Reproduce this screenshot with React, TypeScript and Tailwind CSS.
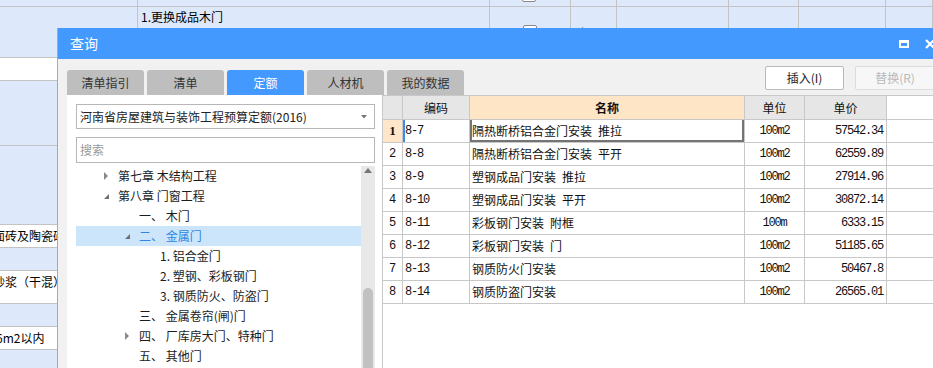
import React from "react";

const tabs = ["清单指引", "清单", "定额", "人材机", "我的数据"];

const tree = [
  { level: 1, text: "第七章 木结构工程", arrow: "right" },
  { level: 1, text: "第八章 门窗工程", arrow: "down" },
  { level: 2, text: "一、 木门" },
  { level: 2, text: "二、 金属门", arrow: "down", selected: true },
  { level: 3, text: "1. 铝合金门" },
  { level: 3, text: "2. 塑钢、彩板钢门" },
  { level: 3, text: "3. 钢质防火、防盗门" },
  { level: 2, text: "三、 金属卷帘(闸)门" },
  { level: 2, text: "四、 厂库房大门、特种门", arrow: "right" },
  { level: 2, text: "五、 其他门" },
];

const rows = [
  { code: "8-7", name: "隔热断桥铝合金门安装\u2002推拉", unit: "100m2", price: "57542.34" },
  { code: "8-8", name: "隔热断桥铝合金门安装\u2002平开", unit: "100m2", price: "62559.89" },
  { code: "8-9", name: "塑钢成品门安装\u2002推拉", unit: "100m2", price: "27914.96" },
  { code: "8-10", name: "塑钢成品门安装\u2002平开", unit: "100m2", price: "30872.14" },
  { code: "8-11", name: "彩板钢门安装\u2002附框", unit: "100m", price: "6333.15" },
  { code: "8-12", name: "彩板钢门安装\u2002门", unit: "100m2", price: "51185.65" },
  { code: "8-13", name: "钢质防火门安装", unit: "100m2", price: "50467.8" },
  { code: "8-14", name: "钢质防盗门安装", unit: "100m2", price: "26565.01" },
];

const topCols = [138, 352, 81, 46, 112, 70, 87, 47];

function Arrow({ dir }: { dir?: string }) {
  if (dir === "right")
    return (
      <svg width="14" height="20" viewBox="0 0 14 20">
        <path d="M0 6 L4 10 L0 14 Z" fill="#8a8a8a" />
      </svg>
    );
  if (dir === "down")
    return (
      <svg width="14" height="20" viewBox="0 0 14 20">
        <path d="M5 8 L5 13 L0 13 Z" fill="#6f6f6f" />
      </svg>
    );
  return <div className="w-[14px]" />;
}

function Background() {
  return (
    <div className="flex flex-col h-full text-[12px] text-black">
      <div className="flex h-[7px] border-b border-[#c3c3c3]">
        {topCols.map((w, i) => (
          <div key={i} style={{ width: w }} className="shrink-0 border-r border-[#c3c3c3] relative">
            {i === 2 && (
              <div className="absolute left-[32px] -top-[11px] w-[14px] h-[13px] border border-[#888] rounded-[2px] bg-white" />
            )}
          </div>
        ))}
      </div>
      <div className="flex h-[51px] border-b border-[#c3c3c3]">
        {topCols.map((w, i) => (
          <div key={i} style={{ width: w }} className="shrink-0 border-r border-[#c3c3c3] overflow-hidden">
            {i === 1 && (
              <div className="pl-[3px] pt-[1px] leading-[17px]">
                <div>1.更换成品木门</div>
                <div>2.更换门五金件</div>
              </div>
            )}
            {i === 2 && (
              <div className="ml-[33px] mt-[18px] w-[14px] h-[13px] border border-[#888] rounded-[2px] bg-white" />
            )}
            {i === 3 && <div className="pl-[5px] pt-[17px]">账</div>}
          </div>
        ))}
      </div>
      <div className="h-[23px] border-b border-[#c3c3c3] bg-white" />
      <div className="h-[65px] border-b border-[#c3c3c3]" />
      <div className="h-[79px] border-b border-[#c3c3c3]" />
      <div className="h-[23px] border-b border-[#c3c3c3] bg-white flex items-center">
        <span className="-ml-[7px] whitespace-nowrap">面砖及陶瓷砖</span>
      </div>
      <div className="h-[23px] border-b border-[#c3c3c3]" />
      <div className="h-[33px] border-b border-[#c3c3c3] bg-white pt-[2px]">
        <span className="-ml-[7px] whitespace-nowrap inline-block">砂浆（干混）</span>
      </div>
      <div className="h-[23px] border-b border-[#c3c3c3]" />
      <div className="h-[23px] border-b border-[#c3c3c3] bg-white flex items-center">
        <span className="-ml-[4px] whitespace-nowrap">6m2以内</span>
      </div>
      <div className="flex-1" />
    </div>
  );
}

export default function App() {
  return (
    <div className="relative w-[933px] h-[368px] overflow-hidden bg-[#dde9fb] font-['Noto_Sans_CJK_SC',sans-serif]">
      <Background />

      <div className="absolute left-[57px] top-[28px] w-[890px] h-[345px] border-l border-[#a9a9a9] bg-[#f1f1f1] flex flex-col">
        <div className="h-[31px] shrink-0 bg-[#4499ff] flex items-center pl-[12px] text-white text-[14px]">
          <span>查询</span>
          <div className="flex-1" />
          <div className="w-[10px] h-[8px] border-2 border-t-[3px] border-white" />
          <svg className="ml-[16px] mr-[12px]" width="10" height="10" viewBox="0 0 10 10">
            <path d="M1 1 L9 9 M9 1 L1 9" stroke="white" strokeWidth="2.2" />
          </svg>
        </div>

        <div className="flex-1 flex flex-col pl-[9px]">
          <div className="h-[36px] shrink-0 flex items-start">
            <div className="mt-[11px] flex gap-[3px]">
              {tabs.map((t) => (
                <div
                  key={t}
                  className={`w-[77px] h-[25px] rounded-t-[3px] flex items-center justify-center text-[12px] ${
                    t === "定额" ? "bg-[#4499ff] text-white" : "bg-[#bebebe] text-[#333]"
                  }`}
                >
                  {t}
                </div>
              ))}
            </div>
            <div className="ml-auto mr-[12px] mt-[7px] flex gap-[11px]">
              <div className="w-[79px] h-[24px] bg-white border border-[#b9b9b9] rounded-[2px] flex items-center justify-center text-[12px] text-[#222]">
                插入(I)
              </div>
              <div className="w-[80px] h-[24px] bg-[#f7f7f7] border border-[#dcdcdc] rounded-[2px] flex items-center justify-center text-[12px] text-[#b9b9b9]">
                替换(R)
              </div>
            </div>
          </div>

          <div className="flex-1 flex">
            <div className="w-[315px] shrink-0 bg-white pt-[9px] pl-[9px] pr-[7px] flex flex-col">
              <div className="h-[25px] border border-[#b7b7b7] flex items-center pl-[3px] pr-[7px] text-[12px] text-[#222]">
                <span className="flex-1">河南省房屋建筑与装饰工程预算定额(2016)</span>
                <svg width="6" height="4" viewBox="0 0 6 4">
                  <path d="M0 0 L6 0 L3 3.5 Z" fill="#777" />
                </svg>
              </div>
              <div className="mt-[8px] h-[26px] border border-[#b7b7b7] flex items-center pl-[3px] text-[12px] text-[#9a9a9a]">
                搜索
              </div>
              <div className="mt-[3px] flex-1 flex">
                <div className="flex-1 flex flex-col">
                  {tree.map((n) => (
                    <div
                      key={n.text}
                      className={`h-[20px] flex items-center text-[12px] whitespace-nowrap ${
                        n.selected ? "bg-[#cce5fb] text-[#2f86e0]" : "text-[#1c1c1c]"
                      }`}
                    >
                      <div style={{ width: 28 + (n.level - 1) * 21 }} className="shrink-0" />
                      <Arrow dir={n.arrow} />
                      <span>{n.text}</span>
                    </div>
                  ))}
                </div>
                <div className="w-[14px] bg-[#e8e8e8] flex flex-col items-center">
                  <svg className="mt-[2px]" width="8" height="5" viewBox="0 0 8 5">
                    <path d="M0 5 L8 5 L4 0 Z" fill="#777" />
                  </svg>
                  <div className="mt-[115px] w-[10px] flex-1 bg-[#c1c1c1] rounded-t-[5px]" />
                </div>
              </div>
            </div>

            <div className="flex-1 bg-white border-l border-t border-[#c8c8c8] font-['Liberation_Mono',monospace] text-[12px] text-[#111]">
              <div className="flex h-[24px] border-b border-[#c8c8c8] font-['Noto_Sans_CJK_SC',sans-serif]">
                <div className="w-[20px] bg-[#e6e6e6] border-r border-[#c8c8c8]" />
                <div className="w-[67px] bg-[#e6e6e6] border-r border-[#c8c8c8] flex items-center justify-center">编码</div>
                <div className="w-[275px] bg-[#fde5c6] border-r border-[#c8c8c8] flex items-center justify-center font-bold">名称</div>
                <div className="w-[60px] bg-[#e6e6e6] border-r border-[#c8c8c8] flex items-center justify-center">单位</div>
                <div className="w-[82px] bg-[#e6e6e6] border-r border-[#c8c8c8] flex items-center justify-center">单价</div>
              </div>
              {rows.map((r, i) => (
                <div key={r.code} className="flex h-[23px] border-b border-[#c8c8c8]">
                  <div
                    className={`w-[20px] border-r border-[#c8c8c8] flex items-center justify-center ${
                      i === 0 ? "bg-[#fde6c9] font-['Liberation_Serif',serif] font-bold text-[13px]" : ""
                    }`}
                  >
                    {i + 1}
                  </div>
                  <div
                    className={`w-[67px] border-r border-[#c8c8c8] flex items-center pl-[2px] tracking-[-1.2px] ${
                      i === 0 ? "shadow-[inset_2px_0_0_#3d8ee8]" : ""
                    }`}
                  >
                    {r.code}
                  </div>
                  <div
                    className={`w-[275px] border-r border-[#c8c8c8] flex items-center pl-[2px] whitespace-pre font-['Noto_Sans_CJK_SC',sans-serif] ${
                      i === 0
                        ? "shadow-[inset_2px_0_0_#747474,inset_-2px_0_0_#747474,inset_0_-2px_0_#747474]"
                        : ""
                    }`}
                  >
                    {r.name}
                  </div>
                  <div className="w-[60px] border-r border-[#c8c8c8] flex items-center justify-center tracking-[-1.2px]">
                    {r.unit}
                  </div>
                  <div className="w-[82px] border-r border-[#c8c8c8] flex items-center justify-end pr-[3px] tracking-[-1.2px]">
                    {r.price}
                  </div>
                </div>
              ))}
            </div>
          </div>
        </div>
      </div>
    </div>
  );
}
